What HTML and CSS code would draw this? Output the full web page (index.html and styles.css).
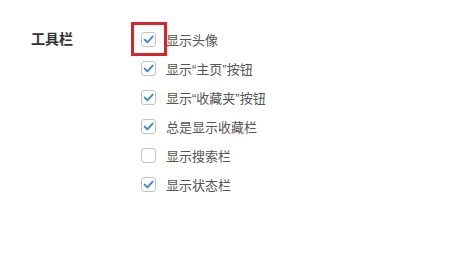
FILE: index.html
```html
<!DOCTYPE html>
<html>
<head>
  <title>工具栏设置</title>
  <link rel="stylesheet" href="styles.css">
</head>
<body>
  <div class="section">
    <div class="section-title">工具栏</div>

    <div class="options">
      <label class="option">
        <span class="box checked highlight">
          <svg viewBox="0 0 13 13"><path d="M2.6 6.6 L5.4 9.3 L10.6 3.6"/></svg>
        </span>
        <span class="text">显示头像</span>
      </label>

      <label class="option">
        <span class="box checked">
          <svg viewBox="0 0 13 13"><path d="M2.6 6.6 L5.4 9.3 L10.6 3.6"/></svg>
        </span>
        <span class="text">显示“主页”按钮</span>
      </label>

      <label class="option">
        <span class="box checked">
          <svg viewBox="0 0 13 13"><path d="M2.6 6.6 L5.4 9.3 L10.6 3.6"/></svg>
        </span>
        <span class="text">显示“收藏夹”按钮</span>
      </label>

      <label class="option">
        <span class="box checked">
          <svg viewBox="0 0 13 13"><path d="M2.6 6.6 L5.4 9.3 L10.6 3.6"/></svg>
        </span>
        <span class="text">总是显示收藏栏</span>
      </label>

      <label class="option">
        <span class="box"></span>
        <span class="text">显示搜索栏</span>
      </label>

      <label class="option">
        <span class="box checked">
          <svg viewBox="0 0 13 13"><path d="M2.6 6.6 L5.4 9.3 L10.6 3.6"/></svg>
        </span>
        <span class="text">显示状态栏</span>
      </label>
    </div>
  </div>
</body>
</html>
```

FILE: styles.css
```css
body {
  margin: 0;
  padding: 0;
  background: #fff;
  font-family: "Liberation Sans", "Noto Sans CJK SC", sans-serif;
  font-size: 13px;
  color: #555;
}

.section {
  display: flex;
  padding: 25px 0 0 31px;
}

.section-title {
  width: 110px;
  height: 29px;
  line-height: 29px;
  font-size: 14px;
  font-weight: bold;
  color: #333;
}

.options {
  display: flex;
  flex-direction: column;
}

.option {
  display: flex;
  align-items: center;
  height: 29px;
}

.box {
  position: relative;
  width: 13px;
  height: 13px;
  border: 1px solid #c4c4c4;
  border-radius: 3px;
  background: #fff;
  margin-right: 10px;
}

.box svg {
  display: block;
  width: 13px;
  height: 13px;
}

.box path {
  fill: none;
  stroke: #3a8ce2;
  stroke-width: 2;
  stroke-linecap: round;
  stroke-linejoin: round;
}

/* red annotation frame round the first checkbox */
.highlight::after {
  content: "";
  position: absolute;
  left: -11px;
  top: -11px;
  width: 30px;
  height: 28px;
  border: 3px solid #d8242a;
}
```
